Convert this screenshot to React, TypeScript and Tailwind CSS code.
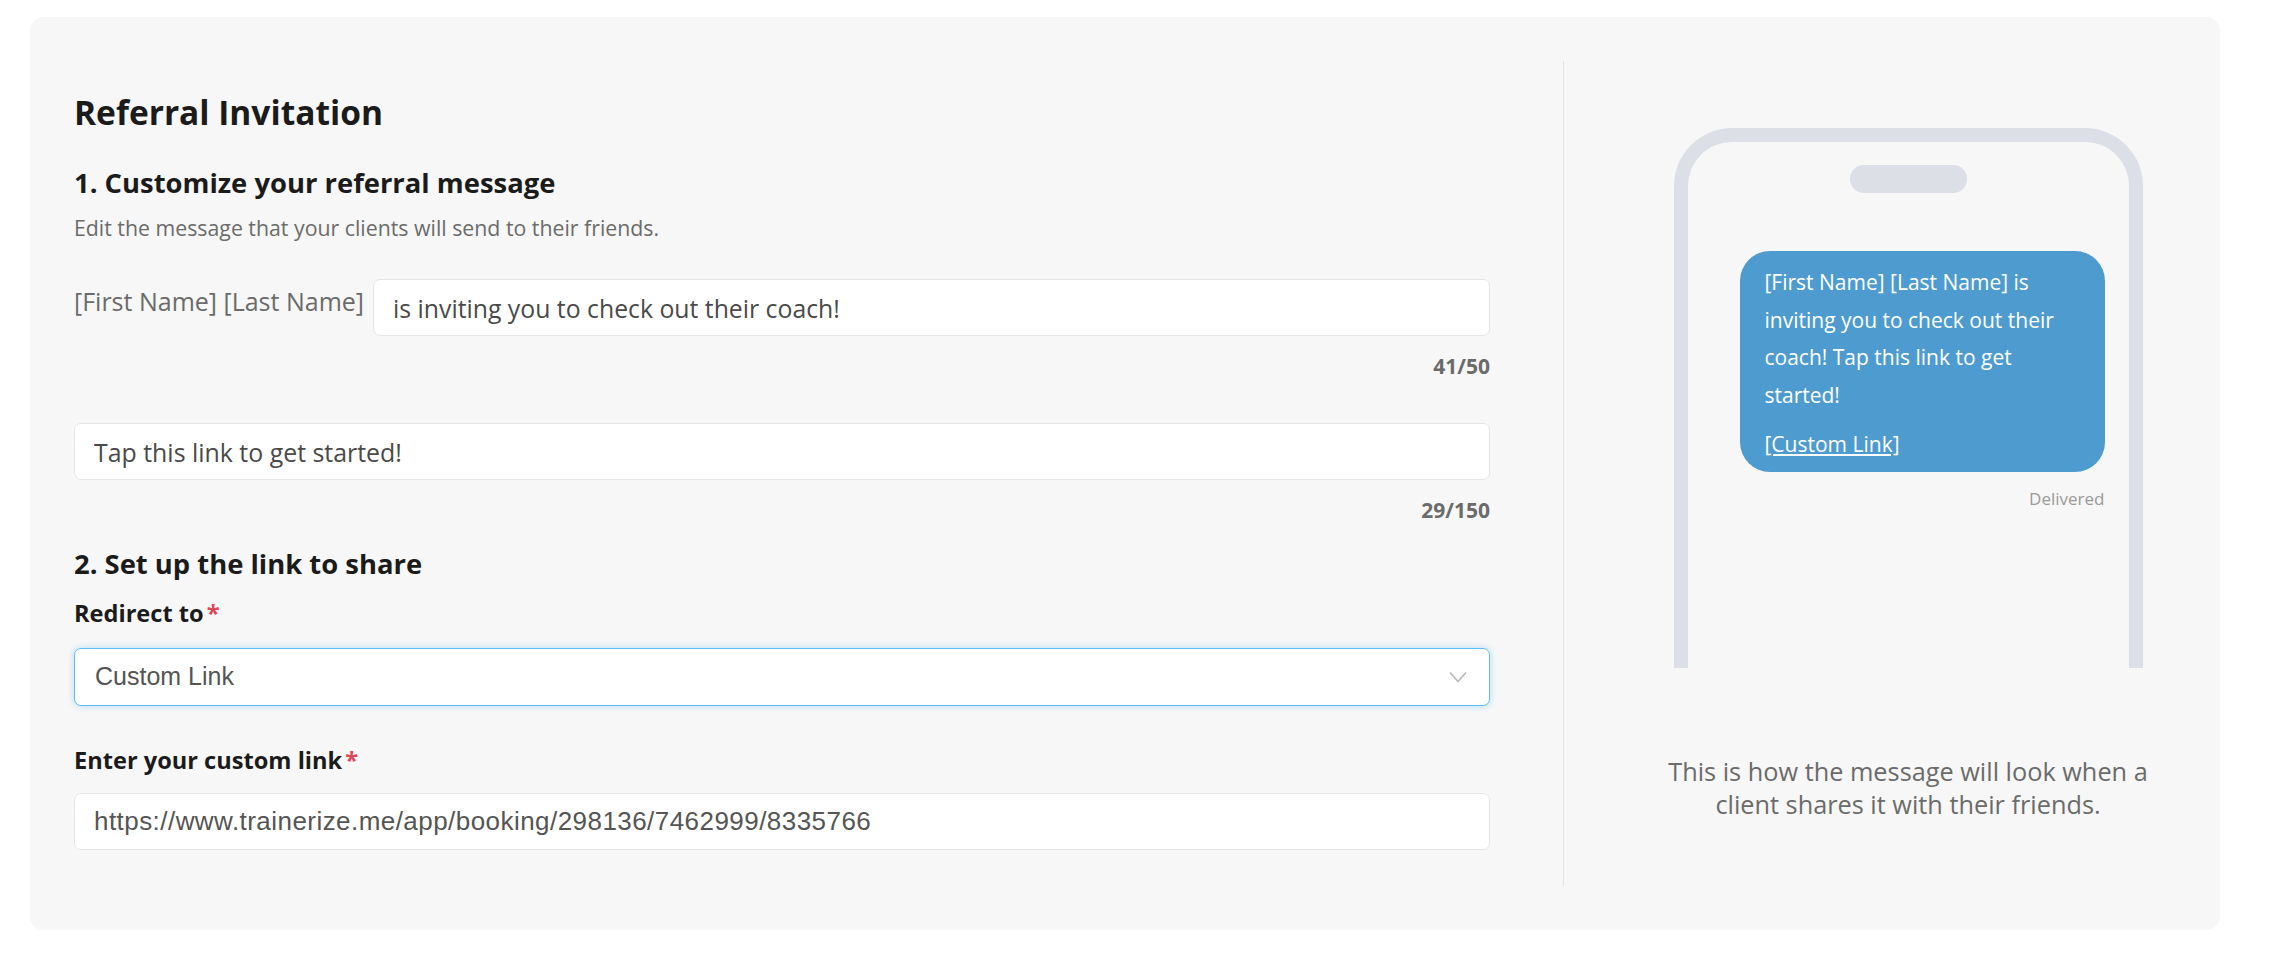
import type { ReactNode } from "react";

const body = "font-['Open_Sans','Noto_Sans',sans-serif]";
const arial = "font-['Liberation_Sans',Arial,sans-serif]";

function Counter({ children }: { children: ReactNode }) {
  return (
    <div className="mt-[18px] text-right text-[21px] leading-[24px] font-bold text-[#6b6b6b]">
      {children}
    </div>
  );
}

function FieldLabel({ children }: { children: ReactNode }) {
  return (
    <div className="text-[23.6px] leading-[28px] font-bold text-[#1b1b1b]">
      {children}
      <span className="ml-[3px] text-[#e0475b]">*</span>
    </div>
  );
}

function PhonePreview() {
  return (
    <div className="flex flex-col items-center">
      {/* phone outline, open at the bottom */}
      <div className="mt-[67px] flex h-[540px] w-[469px] flex-col border-[14px] border-b-0 border-[#dce0e6] rounded-t-[58px]">
        <div className="mx-auto mt-[23px] h-[28px] w-[117px] rounded-full bg-[#dce0e6]" />
        <div className="mr-[24px] mt-[58px] self-end w-[365px]">
          <div className="rounded-[30px] bg-[#4e9ccf] pl-[25px] pr-[22px] pt-[13px] pb-[15px] text-white">
            <p className="text-[21px] leading-[37.6px]">
              [First Name] [Last Name] is inviting you to check out their
              coach! Tap this link to get started!
            </p>
            <p className="mt-[17px] text-[21px] leading-[26px] underline underline-offset-2">
              [Custom Link]
            </p>
          </div>
          <div className="mt-[17px] text-right text-[17px] leading-[20px] text-[#9a9a9a]">
            Delivered
          </div>
        </div>
      </div>
      <p className="mt-[87px] text-center text-[25.3px] leading-[33px] text-[#6b6b6b]">
        This is how the message will look when a
        <br />
        client shares it with their friends.
      </p>
    </div>
  );
}

export default function App() {
  return (
    <div className={`min-h-screen bg-white pl-[30px] pt-[17px] ${body}`}>
      <div className="flex h-[913px] w-[2190px] rounded-[14px] bg-[#f7f7f7]">
        {/* form column */}
        <div className="w-[1533px] shrink-0 pl-[44px] pr-[73px] pt-[75px]">
          <h1 className="text-[33.5px] leading-[40px] font-bold text-[#1b1b1b]">
            Referral Invitation
          </h1>
          <h2 className="mt-[35px] text-[27.4px] leading-[32px] font-bold text-[#1b1b1b]">
            1. Customize your referral message
          </h2>
          <p className="mt-[16px] text-[21.3px] leading-[26px] text-[#6b6b6b]">
            Edit the message that your clients will send to their friends.
          </p>

          <div className="mt-[38px] flex items-start gap-[9px]">
            <span className="mt-[8px] whitespace-nowrap text-[25px] leading-[28px] text-[#6b6b6b]">
              [First Name] [Last Name]
            </span>
            <input
              readOnly
              defaultValue="is inviting you to check out their coach!"
              className="h-[57px] flex-1 rounded-[7px] border border-[#e6e6e6] bg-white px-[19px] text-[24.8px] text-[#4a4a4a] outline-none"
            />
          </div>
          <Counter>41/50</Counter>

          <input
            readOnly
            defaultValue="Tap this link to get started!"
            className="mt-[45px] block h-[57px] w-full rounded-[7px] border border-[#e6e6e6] bg-white px-[19px] text-[24.9px] text-[#4a4a4a] outline-none"
          />
          <Counter>29/150</Counter>

          <h2 className="mt-[26px] text-[27.4px] leading-[32px] font-bold text-[#1b1b1b]">
            2. Set up the link to share
          </h2>
          <div className="mt-[19px]">
            <FieldLabel>Redirect to</FieldLabel>
          </div>
          <button
            type="button"
            className={`mt-[21px] flex h-[58px] w-full items-center justify-between rounded-[7px] border-[1.5px] border-[#5dbdf5] bg-white pl-[20px] pr-[22px] shadow-[0_0_7px_rgba(93,189,245,0.45)] ${arial}`}
          >
            <span className="text-[25px] text-[#555555]">Custom Link</span>
            <svg width="18" height="12" viewBox="0 0 18 12" fill="none">
              <polyline
                points="1,1.5 9,10.5 17,1.5"
                stroke="#b8b8b8"
                strokeWidth="1.6"
              />
            </svg>
          </button>

          <div className="mt-[40px]">
            <FieldLabel>Enter your custom link</FieldLabel>
          </div>
          <input
            readOnly
            defaultValue="https://www.trainerize.me/app/booking/298136/7462999/8335766"
            className={`mt-[19px] block h-[57px] w-full rounded-[7px] border border-[#e6e6e6] bg-white px-[19px] text-[26px] tracking-[0.45px] text-[#555555] outline-none ${arial}`}
          />
        </div>

        {/* preview column */}
        <div className="my-[44px] flex-1 border-l border-[#e4e4e4] pl-[32px]">
          <PhonePreview />
        </div>
      </div>
    </div>
  );
}
